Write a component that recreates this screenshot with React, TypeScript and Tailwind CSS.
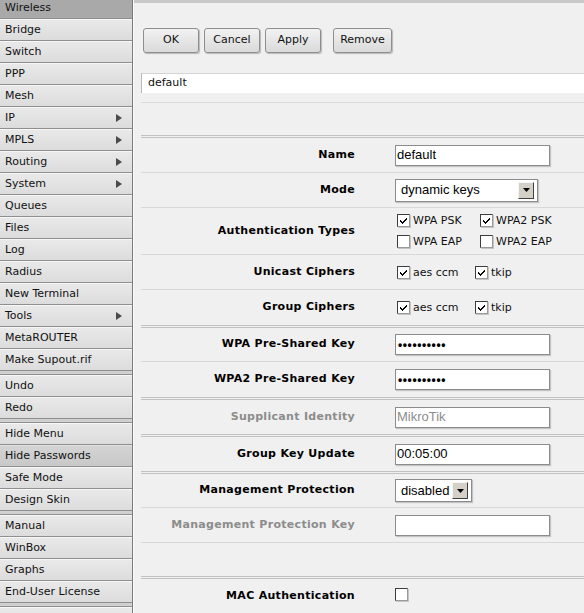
import React from "react";

type Item = { label: string; arrow?: boolean; state?: "sel" | "hover" | "none" };

const groups: Item[][] = [
  [
    { label: "Wireless", state: "sel" },
    { label: "Bridge" },
    { label: "Switch" },
    { label: "PPP" },
    { label: "Mesh" },
    { label: "IP", arrow: true },
    { label: "MPLS", arrow: true },
    { label: "Routing", arrow: true },
    { label: "System", arrow: true },
    { label: "Queues" },
    { label: "Files" },
    { label: "Log" },
    { label: "Radius" },
    { label: "New Terminal" },
    { label: "Tools", arrow: true },
    { label: "MetaROUTER" },
    { label: "Make Supout.rif" },
  ],
  [{ label: "Undo" }, { label: "Redo" }],
  [
    { label: "Hide Menu" },
    { label: "Hide Passwords", state: "hover" },
    { label: "Safe Mode" },
    { label: "Design Skin" },
  ],
  [{ label: "Manual" }, { label: "WinBox" }, { label: "Graphs" }, { label: "End-User License" }],
  [{ label: "" }],
];

function SideItem({ item }: { item: Item }) {
  const bg =
    item.state === "sel"
      ? "bg-[#a9a9a9] border-t-[#a9a9a9]"
      : item.state === "hover"
      ? "bg-gradient-to-b from-[#d4d4d4] to-[#c8c8c8] border-t-[#e0e0e0]"
      : "bg-gradient-to-b from-[#e9e9e9] to-[#dcdcdc] border-t-[#f7f7f7]";
  return (
    <div
      className={`h-[22px] shrink-0 flex items-center justify-between pl-[5px] pr-[10px] border-t border-b border-b-[#8f8f8f] text-[11px] text-[#111] ${bg}`}
    >
      <span>{item.label}</span>
      {item.arrow && (
        <svg width="6" height="8" viewBox="0 0 6 8">
          <path d="M0 0 L6 4 L0 8 Z" fill="#4a4a4a" />
        </svg>
      )}
    </div>
  );
}

function Check({ checked }: { checked?: boolean }) {
  return (
    <span className="inline-flex w-[13px] h-[13px] shrink-0 bg-white border border-[#3c3c3c] border-r-[#9a9a9a] border-b-[#9a9a9a] shadow-[1px_1px_0_#c4c4c4] items-center justify-center">
      {checked && (
        <svg width="7" height="7" viewBox="0 0 7 7" shapeRendering="crispEdges">
          <path d="M0 2 L0 5 L2 7 L7 2 L7 0 L2 5 Z" fill="#000" />
        </svg>
      )}
    </span>
  );
}

function CheckLabel({ checked, label, w }: { checked?: boolean; label: string; w: string }) {
  return (
    <div className={`flex items-center gap-[3px] h-[13px] ${w}`}>
      <Check checked={checked} />
      <span className="text-[11px] leading-[13px] text-[#111]">{label}</span>
    </div>
  );
}

function TextBox({ value, gray, dots }: { value: string; gray?: boolean; dots?: boolean }) {
  return (
    <div
      className={`w-[155px] h-[21px] bg-white border border-[#8c8c8c] shadow-[1px_1px_1px_#c4c4c4] flex items-center font-['Liberation_Sans',sans-serif] ${
        dots ? "pl-[2px] text-[12px] font-bold text-[#000] tracking-[0.6px]" : "pl-[1px] text-[13px]"
      } ${gray ? "text-[#8c8c8c]" : "text-[#000]"}`}
    >
      {value}
    </div>
  );
}

function Select({ value, w }: { value: string; w: string }) {
  return (
    <div
      className={`${w} h-[23px] bg-white border border-[#8c8c8c] shadow-[1px_1px_1px_#c4c4c4] flex items-center pl-[5px] pr-[3px]`}
    >
      <span className="flex-1 font-['Liberation_Sans',sans-serif] text-[13px] text-[#000]">{value}</span>
      <span className="w-[16px] h-[17px] bg-[#d4d0c8] border border-t-[#f4f4f4] border-l-[#f4f4f4] border-r-[#404040] border-b-[#404040] flex items-center justify-center">
        <svg width="7" height="4" viewBox="0 0 7 4">
          <path d="M0 0 H7 L3.5 4 Z" fill="#000" />
        </svg>
      </span>
    </div>
  );
}

function Row({
  h,
  double,
  label,
  disabled,
  children,
}: {
  h: string;
  double?: boolean;
  label?: string;
  disabled?: boolean;
  children?: React.ReactNode;
}) {
  const border = double
    ? "border-t-[3px] border-double border-[#c2c2c2]"
    : "border-t border-[#d8d8d8]";
  return (
    <div className={`${h} ${border} flex items-center shrink-0`}>
      <div
        className={`w-[214px] text-right font-bold text-[11px] tracking-[0.3px] ${
          disabled ? "text-[#8c8c8c]" : "text-[#000]"
        }`}
      >
        {label}
      </div>
      <div className="ml-[40px]">{children}</div>
    </div>
  );
}

function Btn({ label, w }: { label: string; w: string }) {
  return (
    <button
      className={`${w} h-[25px] rounded-[3px] border border-[#8e8e8e] bg-gradient-to-b from-[#f2f2f2] to-[#dadada] shadow-[1px_1px_1px_#b8b8b8] text-[11px] text-[#111] flex items-center justify-center`}
    >
      {label}
    </button>
  );
}

export default function App() {
  return (
    <div className="w-[584px] h-[613px] overflow-hidden flex font-['DejaVu_Sans',sans-serif] bg-[#f0f0f0]">
      <div className="w-[133px] shrink-0 border-r border-[#7c7c7c] bg-[#d2d2d2] overflow-hidden">
        <div className="-mt-[3px] flex flex-col">
          {groups.map((g, gi) => (
            <React.Fragment key={gi}>
              {gi > 0 && <div className="h-[4px] shrink-0 bg-[#d0d0d0] border-b border-[#8f8f8f]" />}
              {g.map((it, ii) => (
                <SideItem key={ii} item={it} />
              ))}
            </React.Fragment>
          ))}
        </div>
      </div>
      <div className="flex-1 flex flex-col bg-[#f0f0f0] border-l border-[#fafafa] overflow-hidden">
        <div className="h-[3px] shrink-0 bg-[#c9c9c9]" />
        <div className="pl-[7px] flex flex-col">
          <div className="flex pt-[25px] pl-[2px]">
            <div className="flex gap-[5px]">
              <Btn label="OK" w="w-[56px]" />
              <Btn label="Cancel" w="w-[56px]" />
              <Btn label="Apply" w="w-[56px]" />
            </div>
            <div className="ml-[12px]">
              <Btn label="Remove" w="w-[59px]" />
            </div>
          </div>
          <div className="mt-[20px] h-[20px] bg-white border-l border-t border-l-[#b8b8b8] border-t-[#d4d4d4] flex items-center pl-[6px] text-[11px] text-[#111]">
            default
          </div>
          <div className="mt-[9px] h-[33px] border-t border-[#dadada]" />
          <Row h="h-[37px]" double label="Name">
            <TextBox value="default" />
          </Row>
          <Row h="h-[35px]" label="Mode">
            <Select value="dynamic keys" w="w-[143px]" />
          </Row>
          <Row h="h-[47px]" label="Authentication Types">
            <div className="flex flex-col gap-[8px] pl-[2px]">
              <div className="flex">
                <CheckLabel checked label="WPA PSK" w="w-[83px]" />
                <CheckLabel checked label="WPA2 PSK" w="w-[90px]" />
              </div>
              <div className="flex">
                <CheckLabel label="WPA EAP" w="w-[83px]" />
                <CheckLabel label="WPA2 EAP" w="w-[90px]" />
              </div>
            </div>
          </Row>
          <Row h="h-[35px]" label="Unicast Ciphers">
            <div className="flex pl-[2px]">
              <CheckLabel checked label="aes ccm" w="w-[78px]" />
              <CheckLabel checked label="tkip" w="w-[60px]" />
            </div>
          </Row>
          <Row h="h-[36px]" label="Group Ciphers">
            <div className="flex pl-[2px]">
              <CheckLabel checked label="aes ccm" w="w-[78px]" />
              <CheckLabel checked label="tkip" w="w-[60px]" />
            </div>
          </Row>
          <Row h="h-[36px]" double label="WPA Pre-Shared Key">
            <TextBox value="••••••••••" dots />
          </Row>
          <Row h="h-[36px]" label="WPA2 Pre-Shared Key">
            <TextBox value="••••••••••" dots />
          </Row>
          <Row h="h-[37px]" double label="Supplicant Identity" disabled>
            <TextBox value="MikroTik" gray />
          </Row>
          <Row h="h-[37px]" double label="Group Key Update">
            <TextBox value="00:05:00" />
          </Row>
          <Row h="h-[36px]" double label="Management Protection">
            <Select value="disabled" w="w-[77px]" />
          </Row>
          <Row h="h-[35px]" label="Management Protection Key" disabled>
            <TextBox value="" />
          </Row>
          <Row h="h-[34px]" />
          <Row h="h-[37px]" double label="MAC Authentication">
            <Check />
          </Row>
          <div className="h-[20px] border-t border-[#d8d8d8]" />
        </div>
      </div>
    </div>
  );
}
